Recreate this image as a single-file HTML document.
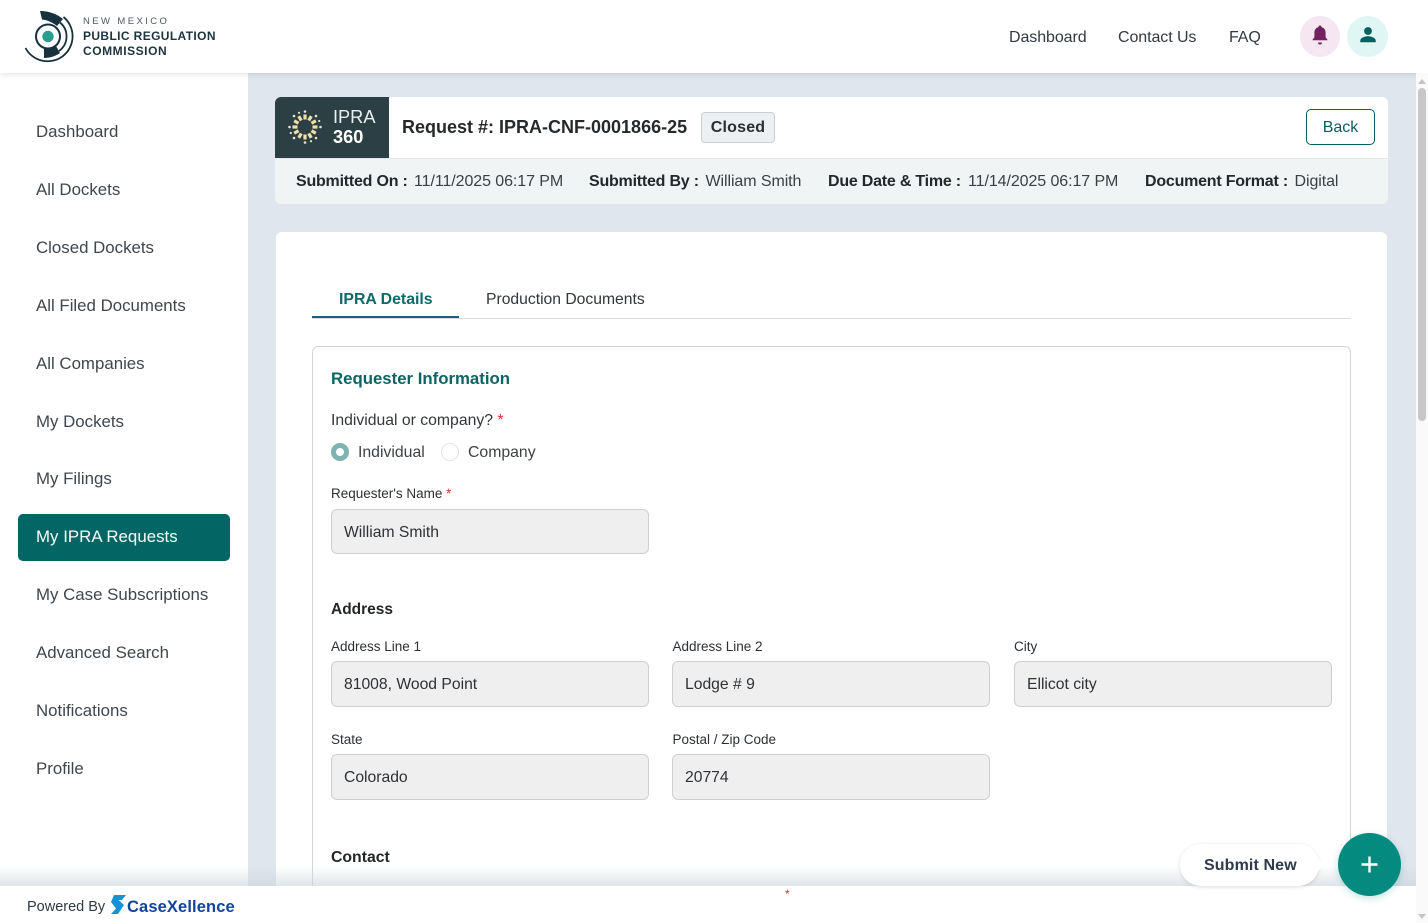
<!DOCTYPE html>
<html><head><meta charset="utf-8"><style>
*{box-sizing:border-box}
html,body{margin:0;padding:0;width:1428px;height:923px;overflow:hidden;background:#fff;font-family:"Liberation Sans",sans-serif;color:#212529}
#w{position:relative;width:1428px;height:923px;overflow:hidden}
.a{position:absolute;white-space:nowrap}
.nav{position:absolute;left:36px;font-size:16.85px;line-height:24px;margin-top:1px;color:#3f474e;white-space:nowrap}
.top{position:absolute;top:27px;font-size:16px;line-height:22px;letter-spacing:-.08px;color:#333a40;white-space:nowrap}
.lb{position:absolute;font-size:13.5px;line-height:18px;margin-top:1px;color:#2b3035;white-space:nowrap}
.in{position:absolute;width:318px;height:46px;background:#efefef;border:1px solid #cdd0d3;border-radius:6px;font-size:15.7px;line-height:45px;padding-left:12px;color:#2e3236;white-space:nowrap}
.m{position:absolute;top:171px;font-size:16px;line-height:22px;color:#3a4045;white-space:nowrap;letter-spacing:-.08px}
.mb{position:absolute;top:171px;font-size:16px;line-height:22px;font-weight:700;color:#23282c;white-space:nowrap;letter-spacing:-.22px}
.r{color:#d9302c}
</style></head><body><div id="w">
<div class="a" style="left:248px;top:73px;width:1168px;height:850px;background:#e0e6ee"></div>
<div class="a" style="left:0;top:73px;width:248px;height:850px;background:#fff"></div>
<div class="a" style="left:0;top:0;width:1428px;height:73px;background:#fff;box-shadow:0 1px 6px rgba(60,70,90,.18)"></div>

<svg class="a" style="left:20px;top:6px" width="60" height="62" viewBox="0 0 60 62" fill="none">
<path d="M20 5C29 5 37 8 43 13L37 20C32 16 27 14 22 13.500Z" fill="#17313d"/>
<path d="M43.500 11A25 25 0 1 1 5.500 42" stroke="#17313d" stroke-width="1.800"/>
<path d="M40 16.500A18 18 0 0 1 39 45" stroke="#17313d" stroke-width="1.800"/>
<circle cx="28" cy="30.500" r="12" stroke="#17313d" stroke-width="2"/>
<path d="M24 43C28 43 33 42 36 40L40 47C36 50 30 52 24 52Z" fill="#17313d"/>
<circle cx="28" cy="30.500" r="5.700" fill="#2a9d91"/>
</svg>
<div class="a" style="left:83px;top:16px;font-size:9.500px;line-height:12px;letter-spacing:2.400px;color:#4a5a63">NEW MEXICO</div>
<div class="a" style="left:83px;top:29px;font-size:12px;line-height:15px;font-weight:700;letter-spacing:.38px;color:#1c3440">PUBLIC REGULATION</div>
<div class="a" style="left:83px;top:44px;font-size:12px;line-height:15px;font-weight:700;letter-spacing:.55px;color:#1c3440">COMMISSION</div>

<div class="top" style="left:1009px">Dashboard</div>
<div class="top" style="left:1118px">Contact Us</div>
<div class="top" style="left:1229px">FAQ</div>
<div class="a" style="left:1300px;top:16px;width:40px;height:41px;border-radius:50%;background:#f5e6f2"></div>
<svg class="a" style="left:1310px;top:24px" width="20" height="22" viewBox="0 0 20 22"><path d="M10 1.500c1 0 1.600.7 1.600 1.600 2.600.7 4 2.800 4 5.600v4.600l1.800 2.200v.8H2.600v-.8l1.800-2.200V8.700c0-2.800 1.400-4.900 4-5.600C8.400 2.200 9 1.500 10 1.500z" fill="#74215f"/><path d="M8 18.500h4a2 2 0 0 1-4 0z" fill="#74215f"/></svg>
<div class="a" style="left:1347px;top:16px;width:41px;height:41px;border-radius:50%;background:#e0f6f5"></div>
<svg class="a" style="left:1358px;top:25px" width="20" height="20" viewBox="0 0 20 20"><circle cx="10" cy="6" r="3.900" fill="#05605f"/><path d="M2.300 17.200v-1.600c0-3 5-4.300 7.700-4.300s7.700 1.300 7.700 4.300v1.600z" fill="#05605f"/></svg>

<div class="nav" style="top:119px">Dashboard</div>
<div class="nav" style="top:177px">All Dockets</div>
<div class="nav" style="top:235px">Closed Dockets</div>
<div class="nav" style="top:293px">All Filed Documents</div>
<div class="nav" style="top:351px">All Companies</div>
<div class="nav" style="top:409px">My Dockets</div>
<div class="nav" style="top:466px">My Filings</div>
<div class="a" style="left:18px;top:514px;width:212px;height:47px;border-radius:5px;background:#046664"></div>
<div class="nav" style="top:524px;color:#f4fbfa;letter-spacing:.02px">My IPRA Requests</div>
<div class="nav" style="top:582px">My Case Subscriptions</div>
<div class="nav" style="top:640px">Advanced Search</div>
<div class="nav" style="top:698px">Notifications</div>
<div class="nav" style="top:756px">Profile</div>

<div class="a" style="left:275px;top:97px;width:1113px;height:107px;background:#f0f4f5;border-radius:6px;overflow:hidden">
 <div class="a" style="left:0;top:0;width:1113px;height:62px;background:#fff;border-bottom:1px solid #e4e8ea"></div>
 <div class="a" style="left:0;top:0;width:114px;height:61px;background:#2b3f45"></div>
</div>
<svg class="a" style="left:287px;top:109px" width="36" height="36" viewBox="0 0 36 36">
<g stroke="#f2dfa6" stroke-width="3.200">
<path d="M18 5.500V10.500" transform="rotate(0 18 18)"/><path d="M18 5.500V10.500" transform="rotate(30 18 18)"/><path d="M18 5.500V10.500" transform="rotate(60 18 18)"/><path d="M18 5.500V10.500" transform="rotate(90 18 18)"/><path d="M18 5.500V10.500" transform="rotate(120 18 18)"/><path d="M18 5.500V10.500" transform="rotate(150 18 18)"/><path d="M18 5.500V10.500" transform="rotate(180 18 18)"/><path d="M18 5.500V10.500" transform="rotate(210 18 18)"/><path d="M18 5.500V10.500" transform="rotate(240 18 18)"/><path d="M18 5.500V10.500" transform="rotate(270 18 18)"/><path d="M18 5.500V10.500" transform="rotate(300 18 18)"/><path d="M18 5.500V10.500" transform="rotate(330 18 18)"/>
</g>
<g fill="#e9e4d0"><circle cx="18" cy="2.500" r="1.300"/><circle cx="18" cy="33.500" r="1.300"/><circle cx="2.500" cy="18" r="1.300"/><circle cx="33.500" cy="18" r="1.300"/><circle cx="7" cy="7" r="1.300"/><circle cx="29" cy="7" r="1.300"/><circle cx="7" cy="29" r="1.300"/><circle cx="29" cy="29" r="1.300"/><circle cx="12" cy="3.800" r="1.100"/><circle cx="24" cy="32.200" r="1.100"/><circle cx="32.200" cy="12" r="1.100"/><circle cx="3.800" cy="24" r="1.100"/></g>
</svg>
<div class="a" style="left:333px;top:107px;font-size:18.200px;line-height:20px;color:#e8f1f2">IPRA</div>
<div class="a" style="left:333px;top:127px;font-size:18.200px;line-height:20px;font-weight:700;color:#fff">360</div>
<div class="a" style="left:402px;top:116px;font-size:18px;line-height:22px;font-weight:700;color:#26292c">Request #: IPRA-CNF-0001866-25</div>
<div class="a" style="left:701px;top:112px;width:74px;height:31px;border:1px solid #c8d0d6;border-radius:4px;background:#edf0f3;font-size:16px;font-weight:700;line-height:29px;text-align:center;color:#2a2e31;letter-spacing:.2px">Closed</div>
<div class="a" style="left:1306px;top:109px;width:69px;height:36px;border:1px solid #0c5c66;border-radius:5px;background:#fff;font-size:16px;line-height:35px;text-align:center;color:#0d5a63">Back</div>

<div class="mb" style="left:296px">Submitted On :</div><div class="m" style="left:414px">11/11/2025 06:17 PM</div>
<div class="mb" style="left:589px">Submitted By :</div><div class="m" style="left:705.500px">William Smith</div>
<div class="mb" style="left:828px">Due Date &amp; Time :</div><div class="m" style="left:968px">11/14/2025 06:17 PM</div>
<div class="mb" style="left:1145px">Document Format :</div><div class="m" style="left:1294.500px">Digital</div>

<div class="a" style="left:276px;top:232px;width:1111px;height:691px;background:#fff;border-radius:6px 6px 0 0"></div>
<div class="a" style="left:339px;top:290px;font-size:15.850px;line-height:20px;font-weight:700;color:#0e6a69">IPRA Details</div>
<div class="a" style="left:486px;top:290px;font-size:15.700px;line-height:20px;color:#30363a">Production Documents</div>
<div class="a" style="left:312px;top:318px;width:1039px;height:1px;background:#dcdfe2"></div>
<div class="a" style="left:312px;top:316px;width:147px;height:2px;background:#1a6079"></div>

<div class="a" style="left:312px;top:346px;width:1039px;height:577px;border:1px solid #d3d6d9;border-bottom:none;border-radius:6px 6px 0 0"></div>
<div class="a" style="left:331px;top:368px;font-size:16.800px;line-height:21px;font-weight:700;color:#0e6464">Requester Information</div>
<div class="a" style="left:331px;top:411px;font-size:15.750px;line-height:20px;color:#33383c">Individual or company? <span class="r">*</span></div>
<div class="a" style="left:331px;top:443px;width:18px;height:18px;border-radius:50%;border:5px solid #7fb2b2;background:#fff"></div>
<div class="a" style="left:358px;top:443px;font-size:15.800px;line-height:20px;color:#3c4246">Individual</div>
<div class="a" style="left:441px;top:443px;width:18px;height:18px;border-radius:50%;border:1px solid #e2e4e6;background:#fff"></div>
<div class="a" style="left:468px;top:443px;font-size:15.800px;line-height:20px;color:#3c4246">Company</div>
<div class="lb" style="left:331px;top:484px">Requester's Name <span class="r">*</span></div>
<div class="in" style="left:331px;top:509px;height:45px">William Smith</div>

<div class="a" style="left:331px;top:601px;font-size:15.500px;line-height:18px;font-weight:700;color:#23272a">Address</div>
<div class="lb" style="left:331px;top:637px">Address Line 1</div>
<div class="lb" style="left:672.500px;top:637px">Address Line 2</div>
<div class="lb" style="left:1014px;top:637px">City</div>
<div class="in" style="left:331px;top:661px">81008, Wood Point</div>
<div class="in" style="left:672px;top:661px">Lodge # 9</div>
<div class="in" style="left:1014px;top:661px">Ellicot city</div>
<div class="lb" style="left:331px;top:730px">State</div>
<div class="lb" style="left:672.500px;top:730px">Postal / Zip Code</div>
<div class="in" style="left:331px;top:754px">Colorado</div>
<div class="in" style="left:672px;top:754px">20774</div>
<div class="a" style="left:331px;top:849px;font-size:15.800px;line-height:18px;font-weight:700;color:#23272a">Contact</div>

<div class="a" style="left:0;top:866px;width:1416px;height:20px;background:linear-gradient(to bottom,rgba(200,208,214,0),rgba(200,208,214,.55))"></div>
<div class="a" style="left:0;top:886px;width:1416px;height:37px;background:#fff"></div>
<div class="a" style="left:785px;top:887px;font-size:12px;line-height:14px;color:#c0392b">*</div>
<div class="a" style="left:27px;top:898px;font-size:14.500px;line-height:18px;color:#2f3a45">Powered By</div>
<svg class="a" style="left:110px;top:895px" width="16" height="19" viewBox="0 0 16 19"><path d="M4 0H16L12 5H8.500L14 10 8 19H1L6 13.500 1 7Z" fill="#1593d6"/></svg>
<div class="a" style="left:127px;top:898px;font-size:16.500px;line-height:18px;font-weight:700;color:#14439b;letter-spacing:.12px">CaseXellence</div>

<div class="a" style="left:1180px;top:844px;width:139px;height:42px;border-radius:21px;background:#fff;box-shadow:0 1px 4px rgba(60,70,90,.18);font-size:16px;font-weight:700;line-height:41px;padding-left:24px;padding-top:1px;color:#2f3b4a;letter-spacing:.12px">Submit New</div>
<div class="a" style="left:1318px;top:859px;width:0;height:0;border-left:7px solid #fff;border-top:6px solid transparent;border-bottom:6px solid transparent"></div>
<div class="a" style="left:1338px;top:833px;width:63px;height:63px;border-radius:50%;background:#058a80;box-shadow:0 2px 8px rgba(0,140,130,.25)"></div>
<svg class="a" style="left:1360px;top:855px" width="19" height="19" viewBox="0 0 19 19"><path d="M9.500 1.500V17.500M1.500 9.500H17.500" stroke="#fff" stroke-width="2.400"/></svg>

<div class="a" style="left:1416px;top:73px;width:12px;height:850px;background:#fafafa"></div>
<div class="a" style="left:1416px;top:0;width:12px;height:73px;background:#fff"></div>
<div class="a" style="left:1418px;top:88px;width:8px;height:333px;border-radius:4px;background:#c9c7c9"></div>
<div class="a" style="left:1418px;top:79px;width:0;height:0;border-left:4px solid transparent;border-right:4px solid transparent;border-bottom:5px solid #c4c4c4"></div>
<div class="a" style="left:1418px;top:914px;width:0;height:0;border-left:4px solid transparent;border-right:4px solid transparent;border-top:5px solid #c4c4c4"></div>
</div></body></html>
